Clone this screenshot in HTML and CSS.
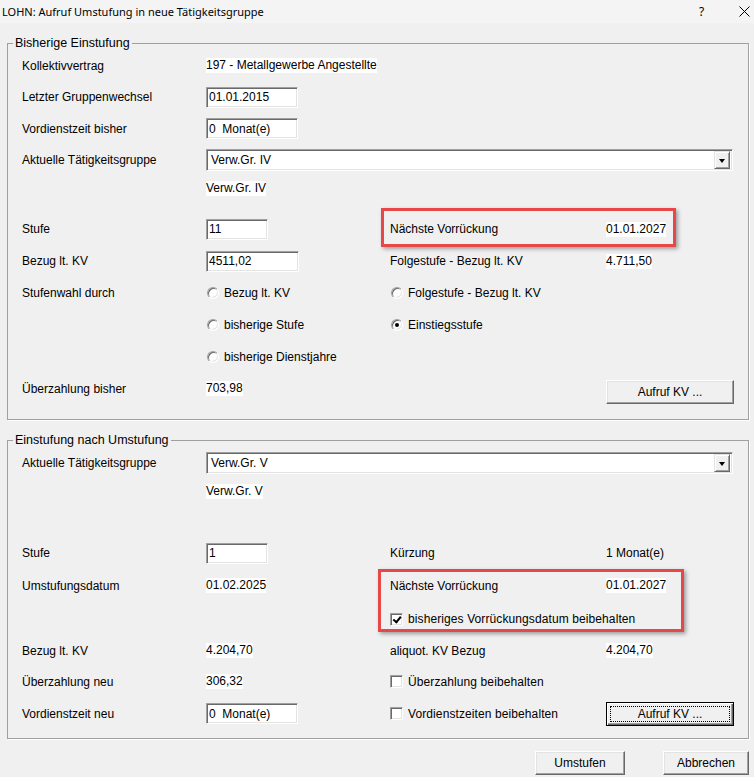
FILE: index.html
```html
<!DOCTYPE html>
<html lang="de">
<head>
    <meta charset="UTF-8">
    <meta name="viewport" content="width=device-width, initial-scale=1.0">
    <title>LOHN: Aufruf Umstufung in neue Tätigkeitsgruppe</title>
    <link rel="stylesheet" href="styles.css">
</head>
<body>
    <div class="dialog">
        <div class="titlebar">
            <span class="title">LOHN: Aufruf Umstufung in neue Tätigkeitsgruppe</span>
            <span class="help">?</span>
            <span class="close">
                <svg width="11" height="11" viewBox="0 0 11 11"><path d="M0.5 0.5 L10.5 10.5 M10.5 0.5 L0.5 10.5" stroke="#000" stroke-width="1" fill="none"/></svg>
            </span>
        </div>

        <!-- current grading -->
        <fieldset class="group">
            <legend>Bisherige Einstufung</legend>
            <div class="row h31">
                <span>Kollektivvertrag</span>
                <span class="cell-wide"><span class="value">197 - Metallgewerbe Angestellte</span></span>
            </div>
            <div class="row">
                <span>Letzter Gruppenwechsel</span>
                <span><span class="field w92">01.01.2015</span></span>
            </div>
            <div class="row h31">
                <span>Vordienstzeit bisher</span>
                <span><span class="field w92">0  Monat(e)</span></span>
            </div>
            <div class="row">
                <span>Aktuelle Tätigkeitsgruppe</span>
                <span class="cell-rest">
                    <span class="combo"><span class="combo-text">Verw.Gr. IV</span><span class="combo-btn"></span></span>
                </span>
            </div>
            <div class="row h24">
                <span></span>
                <span><span class="value">Verw.Gr. IV</span></span>
            </div>
            <div class="row spaced-13">
                <span>Stufe</span>
                <span><span class="field w62">11</span></span>
                <span>Nächste Vorrückung</span>
                <span><span class="value">01.01.2027</span></span>
                <span class="highlight hl-one"></span>
            </div>
            <div class="row">
                <span>Bezug lt. KV</span>
                <span><span class="field w93">4511,02</span></span>
                <span>Folgestufe - Bezug lt. KV</span>
                <span><span class="value">4.711,50</span></span>
            </div>
            <div class="row">
                <span>Stufenwahl durch</span>
                <label class="option"><span class="radio"></span>Bezug lt. KV</label>
                <label class="option"><span class="radio"></span>Folgestufe - Bezug lt. KV</label>
            </div>
            <div class="row">
                <span></span>
                <label class="option"><span class="radio"></span>bisherige Stufe</label>
                <label class="option"><span class="radio checked"></span>Einstiegsstufe</label>
            </div>
            <div class="row h31">
                <span></span>
                <label class="option"><span class="radio"></span>bisherige Dienstjahre</label>
            </div>
            <div class="row h33">
                <span>Überzahlung bisher</span>
                <span><span class="value">703,98</span></span>
                <span></span>
                <span><button class="btn btn-kv lower">Aufruf KV ...</button></span>
            </div>
        </fieldset>

        <!-- grading after the change -->
        <fieldset class="group group-new">
            <legend>Einstufung nach Umstufung</legend>
            <div class="row h31">
                <span>Aktuelle Tätigkeitsgruppe</span>
                <span class="cell-rest">
                    <span class="combo"><span class="combo-text">Verw.Gr. V</span><span class="combo-btn"></span></span>
                </span>
            </div>
            <div class="row h26">
                <span></span>
                <span><span class="value">Verw.Gr. V</span></span>
            </div>
            <div class="row spaced-33">
                <span>Stufe</span>
                <span><span class="field w62">1</span></span>
                <span>Kürzung</span>
                <span>1 Monat(e)</span>
            </div>
            <div class="row h33">
                <span>Umstufungsdatum</span>
                <span><span class="value">01.02.2025</span></span>
                <span>Nächste Vorrückung</span>
                <span><span class="value">01.01.2027</span></span>
                <span class="highlight hl-two"></span>
            </div>
            <div class="row h34">
                <span></span>
                <span></span>
                <label class="option check-option cell-rest-3"><span class="checkbox checked"></span>bisheriges Vorrückungsdatum beibehalten</label>
            </div>
            <div class="row h29">
                <span>Bezug lt. KV</span>
                <span><span class="value">4.204,70</span></span>
                <span>aliquot. KV Bezug</span>
                <span><span class="value">4.204,70</span></span>
            </div>
            <div class="row h33">
                <span>Überzahlung neu</span>
                <span><span class="value">306,32</span></span>
                <label class="option check-option"><span class="checkbox"></span>Überzahlung beibehalten</label>
            </div>
            <div class="row h31">
                <span>Vordienstzeit neu</span>
                <span><span class="field w92">0  Monat(e)</span></span>
                <label class="option check-option"><span class="checkbox"></span>Vordienstzeiten beibehalten</label>
                <span><button class="btn btn-kv focused">Aufruf KV ...</button></span>
            </div>
        </fieldset>

        <div class="actions">
            <button class="btn btn-ok">Umstufen</button>
            <button class="btn btn-cancel">Abbrechen</button>
        </div>
    </div>
</body>
</html>
```

FILE: styles.css
```css
* {
    box-sizing: border-box;
}

body {
    margin: 0;
    background-color: #f0f0f0;
    font-family: "Liberation Sans", Arial, sans-serif;
    font-size: 12px;
    color: #000;
}

.dialog {
    width: 754px;
    height: 777px;
    overflow: hidden;
    background-color: #f0f0f0;
}

/* window caption */
.titlebar {
    height: 23px;
    display: flex;
    align-items: center;
    padding-left: 2px;
    background-color: #f4f4f4;
    font-family: "Noto Sans", "Open Sans", sans-serif;
    font-size: 11px;
}

.title {
    flex: 1;
}

.help {
    width: 40px;
    font-size: 12px;
}

.close {
    width: 15px;
    display: flex;
}

/* group boxes */
.group {
    margin: 13px 5px 0 7px;
    padding: 0 14px 14px;
    border: 1px solid #a0a0a0;
    box-shadow: 1px 1px 0 #fff;
    min-width: 0;
}

.group-new {
    padding-bottom: 9px;
}

.group legend {
    font-size: 12.5px;
    line-height: 14px;
    padding: 0 2px;
    margin-left: -9px;
}

.row {
    position: relative;
    height: 32px;
    display: grid;
    grid-template-columns: 184px 184px 216px 1fr;
    align-items: center;
    white-space: nowrap;
}

.h24 { height: 24px; }
.h26 { height: 26px; }
.h29 { height: 29px; }
.h31 { height: 31px; }
.h33 { height: 33px; }
.h34 { height: 34px; }

.spaced-13 { margin-top: 13px; }
.spaced-33 { margin-top: 33px; }

.cell-wide {
    grid-column: 2 / 4;
}

.cell-rest {
    grid-column: 2 / -1;
}

.cell-rest-3 {
    grid-column: 3 / -1;
}

/* read-only values sit on a white strip */
.value {
    background-color: #fff;
    line-height: 15px;
    display: inline-block;
}

/* sunken edit field */
.field {
    display: flex;
    align-items: center;
    height: 21px;
    padding: 0 2px;
    background-color: #fff;
    border: 1px solid;
    border-color: #a0a0a0 #fff #fff #a0a0a0;
    box-shadow: inset 1px 1px 0 #696969, inset -1px -1px 0 #e3e3e3;
    white-space: pre;
}

.w62 { width: 62px; }
.w92 { width: 92px; }
.w93 { width: 93px; }

.combo {
    display: flex;
    align-items: center;
    justify-content: space-between;
    width: 527px;
    height: 22px;
    padding: 2px 2px 2px 4px;
    background-color: #fff;
    border: 1px solid;
    border-color: #a0a0a0 #fff #fff #a0a0a0;
    box-shadow: inset 1px 1px 0 #696969, inset -1px -1px 0 #e3e3e3;
}

.combo-btn {
    position: relative;
    width: 16px;
    height: 18px;
    background-color: #f0f0f0;
    border: 1px solid;
    border-color: #e3e3e3 #696969 #696969 #e3e3e3;
    box-shadow: inset 1px 1px 0 #fff, inset -1px -1px 0 #a0a0a0;
}

.combo-btn::after {
    content: "";
    position: absolute;
    left: 4px;
    top: 7px;
    border-left: 3.5px solid transparent;
    border-right: 3.5px solid transparent;
    border-top: 4px solid #000;
}

/* radio buttons and check boxes */
.option {
    display: flex;
    align-items: center;
    gap: 5px;
    padding-left: 1px;
}

.check-option {
    padding-left: 0;
    letter-spacing: 0.1px;
}

.radio {
    position: relative;
    width: 12px;
    height: 12px;
    border-radius: 50%;
    background-color: #fff;
    border: 1px solid;
    border-color: #a0a0a0 #fff #fff #a0a0a0;
    box-shadow: inset 1px 1px 0 #696969, inset -1px -1px 0 #e3e3e3;
}

.radio.checked::after {
    content: "";
    position: absolute;
    left: 3px;
    top: 3px;
    width: 4px;
    height: 4px;
    border-radius: 50%;
    background-color: #000;
}

.checkbox {
    position: relative;
    width: 13px;
    height: 13px;
    background-color: #fff;
    border: 1px solid;
    border-color: #a0a0a0 #fff #fff #a0a0a0;
    box-shadow: inset 1px 1px 0 #696969, inset -1px -1px 0 #e3e3e3;
}

.checkbox.checked::after {
    content: "";
    position: absolute;
    left: 3px;
    top: 1px;
    width: 3px;
    height: 6px;
    border: solid #000;
    border-width: 0 2px 2px 0;
    transform: rotate(40deg);
    transform-origin: 60% 60%;
}

/* push buttons */
.btn {
    font-family: inherit;
    font-size: 12px;
    color: #000;
    background-color: #f0f0f0;
    border: 1px solid;
    border-color: #fff #696969 #696969 #fff;
    box-shadow: inset -1px -1px 0 #a0a0a0, inset 1px 1px 0 #e3e3e3;
    padding: 0;
    position: relative;
}

.btn-kv {
    width: 128px;
    height: 24px;
}

.lower {
    margin-top: 6px;
}

.btn.focused {
    border-color: #000;
    box-shadow: inset 1px 1px 0 #fff, inset -1px -1px 0 #696969, inset -2px -2px 0 #a0a0a0;
}

.btn.focused::after {
    content: "";
    position: absolute;
    inset: 3px;
    border: 1px dotted #000;
}

.actions {
    display: flex;
    justify-content: flex-end;
    gap: 38px;
    margin-top: 12px;
    padding-right: 5px;
}

.btn-ok {
    width: 90px;
    height: 24px;
}

.btn-cancel {
    width: 86px;
    height: 24px;
}

/* red markers drawn over the rows */
.highlight {
    position: absolute;
    border: 3px solid #e8474a;
    box-shadow: 2px 2px 4px rgba(0, 0, 0, 0.35);
    pointer-events: none;
}

.hl-one {
    left: 359px;
    top: -5px;
    width: 295px;
    height: 39px;
}

.hl-two {
    left: 356px;
    top: 0;
    width: 306px;
    height: 63px;
}
```
